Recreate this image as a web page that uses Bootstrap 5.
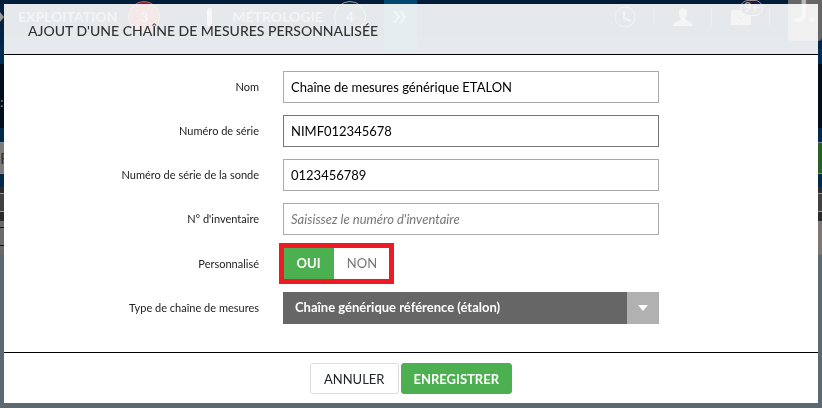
<!DOCTYPE html>
<html lang="fr">
<head>
<meta charset="utf-8">
<meta name="viewport" content="width=device-width, initial-scale=1">
<title>Ajout d'une chaîne de mesures personnalisée</title>
<link href="https://cdn.jsdelivr.net/npm/bootstrap@5.3.0/dist/css/bootstrap.min.css" rel="stylesheet">
<style>
body { font-family: Lato, "Open Sans", sans-serif; font-size: 13px; background: #5b6973; color: #000; }

/* Dimmed application behind the dialog */
.app-behind { inset: 0; }
.app-nav { height: 49px; background: linear-gradient(#001c38, #00284a); color: #888f96; font-size: 14px; line-height: 20px; }
.app-nav-row { height: 34px; }
.nav-arrow { width: 18px; }
.nav-count { width: 32px; height: 32px; border: 1px solid #999; color: #999; background: #00283f; margin-left: 11px; }
.nav-count-red { background: #901818; border-color: #a66; }
.nav-step { width: 5px; height: 18px; background: #aaa; margin-left: 47px; margin-right: 20px; }
.nav-more { width: 33px; height: 49px; background: #004870; margin-left: 18px; }
.nav-tools { color: #999; }
.nav-tool { width: 58px; border-right: 1px solid #44596a; height: 18px; }
.nav-mail-count { top: -8px; left: 28px; width: 23px; height: 16px; border: 1px solid #988; background: #1d1848; font-size: 13px; line-height: 13px; }
.nav-avatar { width: 34px; height: 41px; background: #666; color: #bbb; font-size: 32px; line-height: 20px; margin-left: 18px; border-radius: 0 0 4px 4px; }
.strip-blue { height: 15px; background: #002d55; }
.strip-title { height: 64px; background: #000f1b; color: #888; font-size: 14px; padding-top: 27px; }
.strip-blue-low { height: 14px; background: #00294b; }
.strip-search { height: 32px; background: #7f7c78; border-top: 1px solid #86898c; border-bottom: 1px solid #86898c; color: #333; font-size: 16px; line-height: 30px; }
.strip-search-btn { width: 50%; background: #286026; }
.strip-gap { height: 13px; background: #00294b; }
.strip-head { height: 6px; background: #2b2b2b; }
.strip-bar { height: 19px; background: #404040; border-top: 1px solid #999; border-bottom: 1px solid #999; }
.strip-foot { height: 9px; background: #2b2b2b; }
.strip-row { height: 34px; background: linear-gradient(90deg, #6b6b6b 50%, #7b7875 50%); }
.strip-row-line { height: 25px; width: 50%; padding-top: 6px; }
.strip-row-line::before { content: ""; display: block; height: 19px; border: solid #111; border-width: 1px 0; }

/* Dialog */
.chain-dialog { margin: 4px; }
.chain-head { background: rgba(255, 255, 255, .9); border-bottom: 1px solid #000; height: 51px; padding: 3px 24px 0; }
.chain-title { font-size: 14px; line-height: 20px; font-weight: 500; color: #333; }
.chain-form { padding: 16px 0 28px; display: grid; row-gap: 12px; background: #fff; }
.chain-row { display: grid; grid-template-columns: 255fr 376fr 135fr; column-gap: 24px; align-items: center; }
.chain-label { font-size: 11px; line-height: 16px; color: #222; text-align: right; }
.chain-field { height: 32px; padding: 0 7px; border: 1px solid #aaa; font-size: 13px; color: #000; }
.chain-field:focus, .chain-field-active { border-color: #777; box-shadow: none; color: #000; }
.chain-field::placeholder { color: #777; font-style: italic; }
.chain-toggle { width: 107px; height: 33px; outline: 5px solid #ed1c24; outline-offset: -1px; }
.chain-toggle label { display: flex; align-items: center; justify-content: center; color: #777; cursor: pointer; }
.chain-toggle label:first-of-type { width: 51px; }
.chain-toggle .btn-check:checked + label { background: #4caf50; color: #fff; font-weight: 700; }
.chain-select { appearance: none; height: 32px; width: 100%; border: 0; padding: 0 44px 0 12px; background: #666; color: #fff; font-size: 13px; font-weight: 700; }
.chain-caret { width: 32px; background: #b1b1b1; }
.chain-foot { border-top: 1px solid #000; background: #fff; padding: 10px 0 9px; gap: 2px; }
.chain-btn { height: 31px; font-size: 13px; line-height: 20px; padding: 0 13px; border-radius: 3px; border: 1px solid #ddd; }
.chain-btn-save { background: #4caf50; border-color: #4caf50; color: #fff; padding: 0 12px; }
</style>
<script src="https://cdn.jsdelivr.net/npm/bootstrap@5.3.0/dist/js/bootstrap.bundle.min.js"></script>
</head>
<body>
<div class="app-behind position-fixed overflow-hidden" aria-hidden="true">
  <div class="app-nav d-flex align-items-start fw-bold">
    <div class="app-nav-row d-flex align-items-center">
      <svg class="nav-arrow" height="12" viewBox="0 0 18 12"><path d="M0 1 4 6 0 11Z" fill="#999"/></svg>
      <span>EXPLOITATION</span>
      <span class="nav-count nav-count-red rounded-circle d-flex align-items-center justify-content-center">3</span>
      <span class="nav-step rounded-pill"></span>
      <span>MÉTROLOGIE</span>
      <span class="nav-count rounded-circle d-flex align-items-center justify-content-center">4</span>
    </div>
    <div class="nav-more d-flex justify-content-center pt-2">
      <svg width="14" height="18" viewBox="0 0 14 18" fill="none" stroke="#999" stroke-width="2"><path d="m1 3 5 6-5 6M7 3l5 6-5 6"/></svg>
    </div>
    <div class="nav-tools app-nav-row d-flex align-items-center ms-auto">
      <span class="nav-tool d-flex justify-content-center align-items-center"><svg width="22" height="22" viewBox="0 0 22 22" fill="none" stroke="#888" stroke-width="1"><circle cx="11" cy="11" r="10"/><path d="M10 5v7l7 3" stroke-width="2"/></svg></span>
      <span class="nav-tool d-flex justify-content-center align-items-center"><svg width="20" height="18" viewBox="0 0 20 18" fill="#999"><path d="M6 4c0-5 8-5 8 0 0 4-1 5-2 7 1 2 7 2 8 7H0c1-5 7-5 8-7-1-2-2-3-2-7Z"/></svg></span>
      <span class="nav-tool d-flex justify-content-center align-items-center position-relative"><svg width="20" height="15" viewBox="0 0 20 15"><path d="M0 0h20v15H0Z" fill="#999"/><path d="m0 1 10 8 10-8" fill="none" stroke="#345" stroke-width="1"/></svg><span class="nav-mail-count position-absolute rounded-pill text-center">9+</span></span>
      <span class="nav-avatar align-self-start text-center overflow-hidden">J.</span>
    </div>
  </div>
  <div class="strip-blue"></div>
  <div class="strip-title">:</div>
  <div class="strip-blue-low"></div>
  <div class="strip-search d-flex justify-content-between"><span>F</span><span class="strip-search-btn"></span></div>
  <div class="strip-gap"></div>
  <div class="strip-head"></div>
  <div class="strip-bar"></div>
  <div class="strip-foot"></div>
  <div class="strip-row"><div class="strip-row-line"></div></div>
</div>

<main class="chain-dialog position-relative" role="dialog" aria-labelledby="dialog-title">
  <form>
    <header class="chain-head d-flex align-items-center">
      <h1 class="chain-title m-0" id="dialog-title">AJOUT D'UNE CHAÎNE DE MESURES PERSONNALISÉE</h1>
    </header>
    <div class="chain-form">
      <div class="chain-row">
        <label class="chain-label" for="nom">Nom</label>
        <input class="form-control rounded-0 chain-field" id="nom" type="text" value="Chaîne de mesures générique ETALON">
      </div>
      <div class="chain-row">
        <label class="chain-label" for="serie">Numéro de série</label>
        <input class="form-control rounded-0 chain-field chain-field-active" id="serie" type="text" value="NIMF012345678">
      </div>
      <div class="chain-row">
        <label class="chain-label" for="sonde">Numéro de série de la sonde</label>
        <input class="form-control rounded-0 chain-field" id="sonde" type="text" value="0123456789">
      </div>
      <div class="chain-row">
        <label class="chain-label" for="inventaire">N° d'inventaire</label>
        <input class="form-control rounded-0 chain-field" id="inventaire" type="text" placeholder="Saisissez le numéro d'inventaire">
      </div>
      <div class="chain-row" role="radiogroup" aria-labelledby="perso-label">
        <span class="chain-label" id="perso-label">Personnalisé</span>
        <div class="chain-toggle d-flex">
          <input class="btn-check" type="radio" name="perso" id="perso-oui" checked>
          <label for="perso-oui">OUI</label>
          <input class="btn-check" type="radio" name="perso" id="perso-non">
          <label class="flex-fill" for="perso-non">NON</label>
        </div>
      </div>
      <div class="chain-row">
        <label class="chain-label" for="type">Type de chaîne de mesures</label>
        <div class="position-relative">
          <select class="chain-select d-block rounded-0" id="type">
            <option selected>Chaîne générique référence (étalon)</option>
          </select>
          <span class="chain-caret position-absolute top-0 end-0 h-100 d-flex align-items-center justify-content-center pe-none">
            <svg width="10" height="6" viewBox="0 0 10 6"><path d="M0 0h10L5 6Z" fill="#fff"/></svg>
          </span>
        </div>
      </div>
    </div>
    <footer class="chain-foot d-flex justify-content-center">
      <button class="btn bg-white chain-btn" type="button">ANNULER</button>
      <button class="btn chain-btn chain-btn-save fw-bold" type="submit">ENREGISTRER</button>
    </footer>
  </form>
</main>
</body>
</html>
